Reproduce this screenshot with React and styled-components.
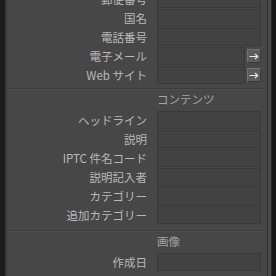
import React from 'react';
import styled, { createGlobalStyle } from 'styled-components';

const Global = createGlobalStyle`
  html, body {
    margin: 0;
    padding: 0;
    background: #161616;
    overflow: hidden;
  }
`;

const Frame = styled.div`
  display: flex;
  width: 276px;
  height: 276px;
  overflow: hidden;
  background: #161616;
`;

const LeftEdge = styled.div`
  width: 5px;
  background: #1b1b1b;
  border-right: 2px solid #3a3a3a;
`;

const Panel = styled.div`
  width: 260px;
  background: #474747;
  display: flex;
  flex-direction: column;
  font-family: "Noto Sans CJK JP", "Noto Sans", sans-serif;
  font-size: 11.5px;
  overflow: hidden;
`;

const Scroller = styled.div`
  width: 3px;
  background: #4b4b4b;
  border-left: 1px solid #2c2c2c;
  border-right: 1px solid #262626;
`;

const Inner = styled.div`
  margin-top: -10px;
  display: flex;
  flex-direction: column;
`;

const Section = styled.div`
  display: flex;
  flex-direction: column;
  gap: 1px;
  padding-bottom: ${p => p.$bottom || 5}px;
`;

const Separator = styled.div`
  height: 1px;
  background: #3b3b3b;
  border-bottom: 1px solid #4f4f4f;
`;

const Row = styled.div`
  display: grid;
  grid-template-columns: 140px 104px;
  column-gap: 10px;
  align-items: center;
  height: 18px;
`;

const HeaderRow = styled(Row)`
  height: 19px;
  align-items: start;
  padding-top: 1px;
`;

const Label = styled.div`
  text-align: right;
  color: #b9b9b9;
  line-height: 18px;
  white-space: nowrap;
`;

const Heading = styled.div`
  color: #a3a3a3;
  line-height: 16px;
  grid-column: 2;
`;

const FieldWrap = styled.div`
  display: flex;
  gap: 2px;
  align-items: center;
  height: 18px;
`;

const Field = styled.div`
  flex: 1;
  height: 16px;
  background: #424242;
  border: 1px solid #393939;
`;

const ArrowButton = styled.div`
  width: 12px;
  height: 12px;
  background: #5c5c5c;
  border: 1px solid;
  border-color: #727272 #3a3a3a #3a3a3a #727272;
  display: flex;
  align-items: center;
  justify-content: center;
`;

const Arrow = () => (
  <svg width="10" height="7" viewBox="0 0 10 7">
    <path d="M0.5 3.5H8.5M6 1l2.7 2.5L6 6" stroke="#e6e6e6" strokeWidth="1.2" fill="none" />
  </svg>
);

const FormRow = ({ label, button }) => (
  <Row>
    <Label>{label}</Label>
    <FieldWrap>
      <Field />
      {button && (
        <ArrowButton>
          <Arrow />
        </ArrowButton>
      )}
    </FieldWrap>
  </Row>
);

const contact = [
  { label: '郵便番号' },
  { label: '国名' },
  { label: '電話番号' },
  { label: '電子メール', button: true },
  { label: 'Web サイト', button: true },
];

const content = ['ヘッドライン', '説明', 'IPTC 件名コード', '説明記入者', 'カテゴリー', '追加カテゴリー'];

export default function App() {
  return (
    <Frame>
      <Global />
      <LeftEdge />
      <Panel>
        <Inner>
          <Section $bottom={4}>
            {contact.map(r => <FormRow key={r.label} {...r} />)}
          </Section>
          <Separator />
          <Section $bottom={6}>
            <HeaderRow><Heading>コンテンツ</Heading></HeaderRow>
            {content.map(l => <FormRow key={l} label={l} />)}
          </Section>
          <Separator />
          <Section>
            <HeaderRow><Heading>画像</Heading></HeaderRow>
            <FormRow label="作成日" />
          </Section>
        </Inner>
      </Panel>
      <Scroller />
    </Frame>
  );
}
